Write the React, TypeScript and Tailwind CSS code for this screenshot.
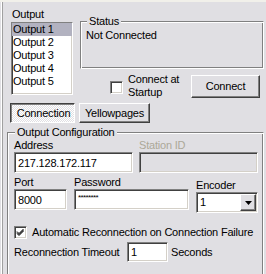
const sunken =
  "border border-t-[#808080] border-l-[#808080] border-r-white border-b-white shadow-[inset_1px_1px_0_#404040,inset_-1px_-1px_0_#d4d0c8]";
const raised =
  "border border-t-white border-l-white border-r-[#404040] border-b-[#404040] shadow-[inset_-1px_-1px_0_#808080]";
const etched =
  "border border-t-[#808080] border-l-[#808080] border-r-white border-b-white shadow-[inset_1px_1px_0_#fff,inset_-1px_-1px_0_#808080]";

function CheckBox({ checked }: { checked?: boolean }) {
  return (
    <span className={`${sunken} relative block h-[13px] w-[13px] shrink-0 bg-white`}>
      {checked && (
        <svg viewBox="0 0 9 9" className="absolute left-[1px] top-[1px] h-[9px] w-[9px]">
          <path d="M1 3.5 L3 5.5 L7.5 1 M1 4.5 L3 6.5 L7.5 2 M1 5.5 L3 7.5 L7.5 3" stroke="#000" strokeWidth="1" fill="none" />
        </svg>
      )}
    </span>
  );
}

const outputs = ["Output 1", "Output 2", "Output 3", "Output 4", "Output 5"];

export default function App() {
  return (
    <div className="relative h-[274px] w-[266px] overflow-hidden bg-[#e0dfe3] font-['Liberation_Sans',Arial,sans-serif] text-[11px] leading-[13px] tracking-[-0.2px] text-black shadow-[inset_0_2px_0_#f1f0ea,inset_1px_0_0_#e0dfe3,inset_2px_0_0_#fff,inset_3px_0_0_#a0a0a0]">
      {/* top: output list + status */}
      <div className="flex h-[103px] pl-[11px] pt-[8px]">
        <div className="w-[62px]">
          <div className="pl-[1px]">Output</div>
          <div className={`${sunken} mt-[1px] h-[73px] bg-white`}>
            {outputs.map((o, i) => (
              <div key={o} className={`h-[13px] pl-[1px] ${i === 0 ? "bg-[#b2b2c0]" : ""}`}>
                {o}
              </div>
            ))}
          </div>
        </div>

        <div className="ml-[7px] mt-[7px] w-[184px]">
          <fieldset className={`${etched} h-[54px]`}>
            <legend className="ml-[6px] bg-[#e0dfe3] px-[2px]">Status</legend>
            <div className="pl-[5px] pt-px">Not Connected</div>
          </fieldset>
          <div className="mt-[6px] flex">
            <div className="ml-[30px] mt-[6px]">
              <CheckBox />
            </div>
            <div className="ml-[5px] mt-[-2px]">
              Connect at
              <br />
              Startup
            </div>
            <button className={`${raised} ml-auto mr-[4px] h-[23px] w-[69px] bg-[#e0dfe3] text-[11px]`}>
              Connect
            </button>
          </div>
        </div>
      </div>

      {/* tab buttons */}
      <div className="flex h-[20px] gap-[4px] pl-[10px]">
        <button className="h-[20px] w-[65px] border border-t-[#404040] border-l-[#404040] border-r-white border-b-white bg-[repeating-conic-gradient(#fff_0_25%,#e0dfe3_0_50%)] bg-[length:2px_2px] pl-[2px] pt-[1px] shadow-[inset_1px_1px_0_#808080]">
          Connection
        </button>
        <button className={`${raised} h-[20px] w-[71px] bg-[#e0dfe3]`}>Yellowpages</button>
      </div>

      {/* output configuration */}
      <fieldset className={`${etched} ml-[7px] mt-[3px] h-[170px] w-[257px]`}>
        <legend className="ml-[7px] bg-[#e0dfe3] px-[2px]">Output Configuration</legend>
        <div className="flex gap-[6px] pl-[6px]">
          <div className="w-[119px]">
            <div>Address</div>
            <div className={`${sunken} h-[21px] bg-white pl-[3px] pt-[4px]`}>217.128.172.117</div>
          </div>
          <div className="w-[119px]">
            <div className="text-[#aca899]">Station ID</div>
            <div className={`${sunken} h-[21px] bg-[#e0dfe3]`} />
          </div>
        </div>

        <div className="mt-[3px] flex pl-[6px]">
          <div className="w-[53px]">
            <div>Port</div>
            <div className={`${sunken} h-[21px] bg-white pl-[3px] pt-[4px]`}>8000</div>
          </div>
          <div className="ml-[7px] w-[115px]">
            <div>Password</div>
            <div className={`${sunken} h-[21px] bg-white pl-[3px] pt-[1px] text-[8px] tracking-[-0.6px]`}>********</div>
          </div>
          <div className="ml-[7px] mt-[3px] w-[62px]">
            <div>Encoder</div>
            <div className={`${sunken} flex h-[21px] items-center bg-white pl-[3px]`}>
              <span className="flex-1">1</span>
              <span className={`${raised} mr-px flex h-[17px] w-[16px] items-center justify-center bg-[#e0dfe3]`}>
                <svg viewBox="0 0 7 4" className="h-[4px] w-[7px]">
                  <path d="M0 0 H7 L3.5 4 Z" fill="#000" />
                </svg>
              </span>
            </div>
          </div>
        </div>

        <div className="mt-[13px] flex items-center pl-[6px]">
          <CheckBox checked />
          <span className="ml-[5px]">Automatic Reconnection on Connection Failure</span>
        </div>

        <div className="mt-[3px] flex items-center pl-[6px]">
          <span className="w-[113px]">Reconnection Timeout</span>
          <div className={`${sunken} h-[20px] w-[41px] bg-white pl-[3px] pt-[3px]`}>1</div>
          <span className="ml-[3px]">Seconds</span>
        </div>
      </fieldset>
    </div>
  );
}
